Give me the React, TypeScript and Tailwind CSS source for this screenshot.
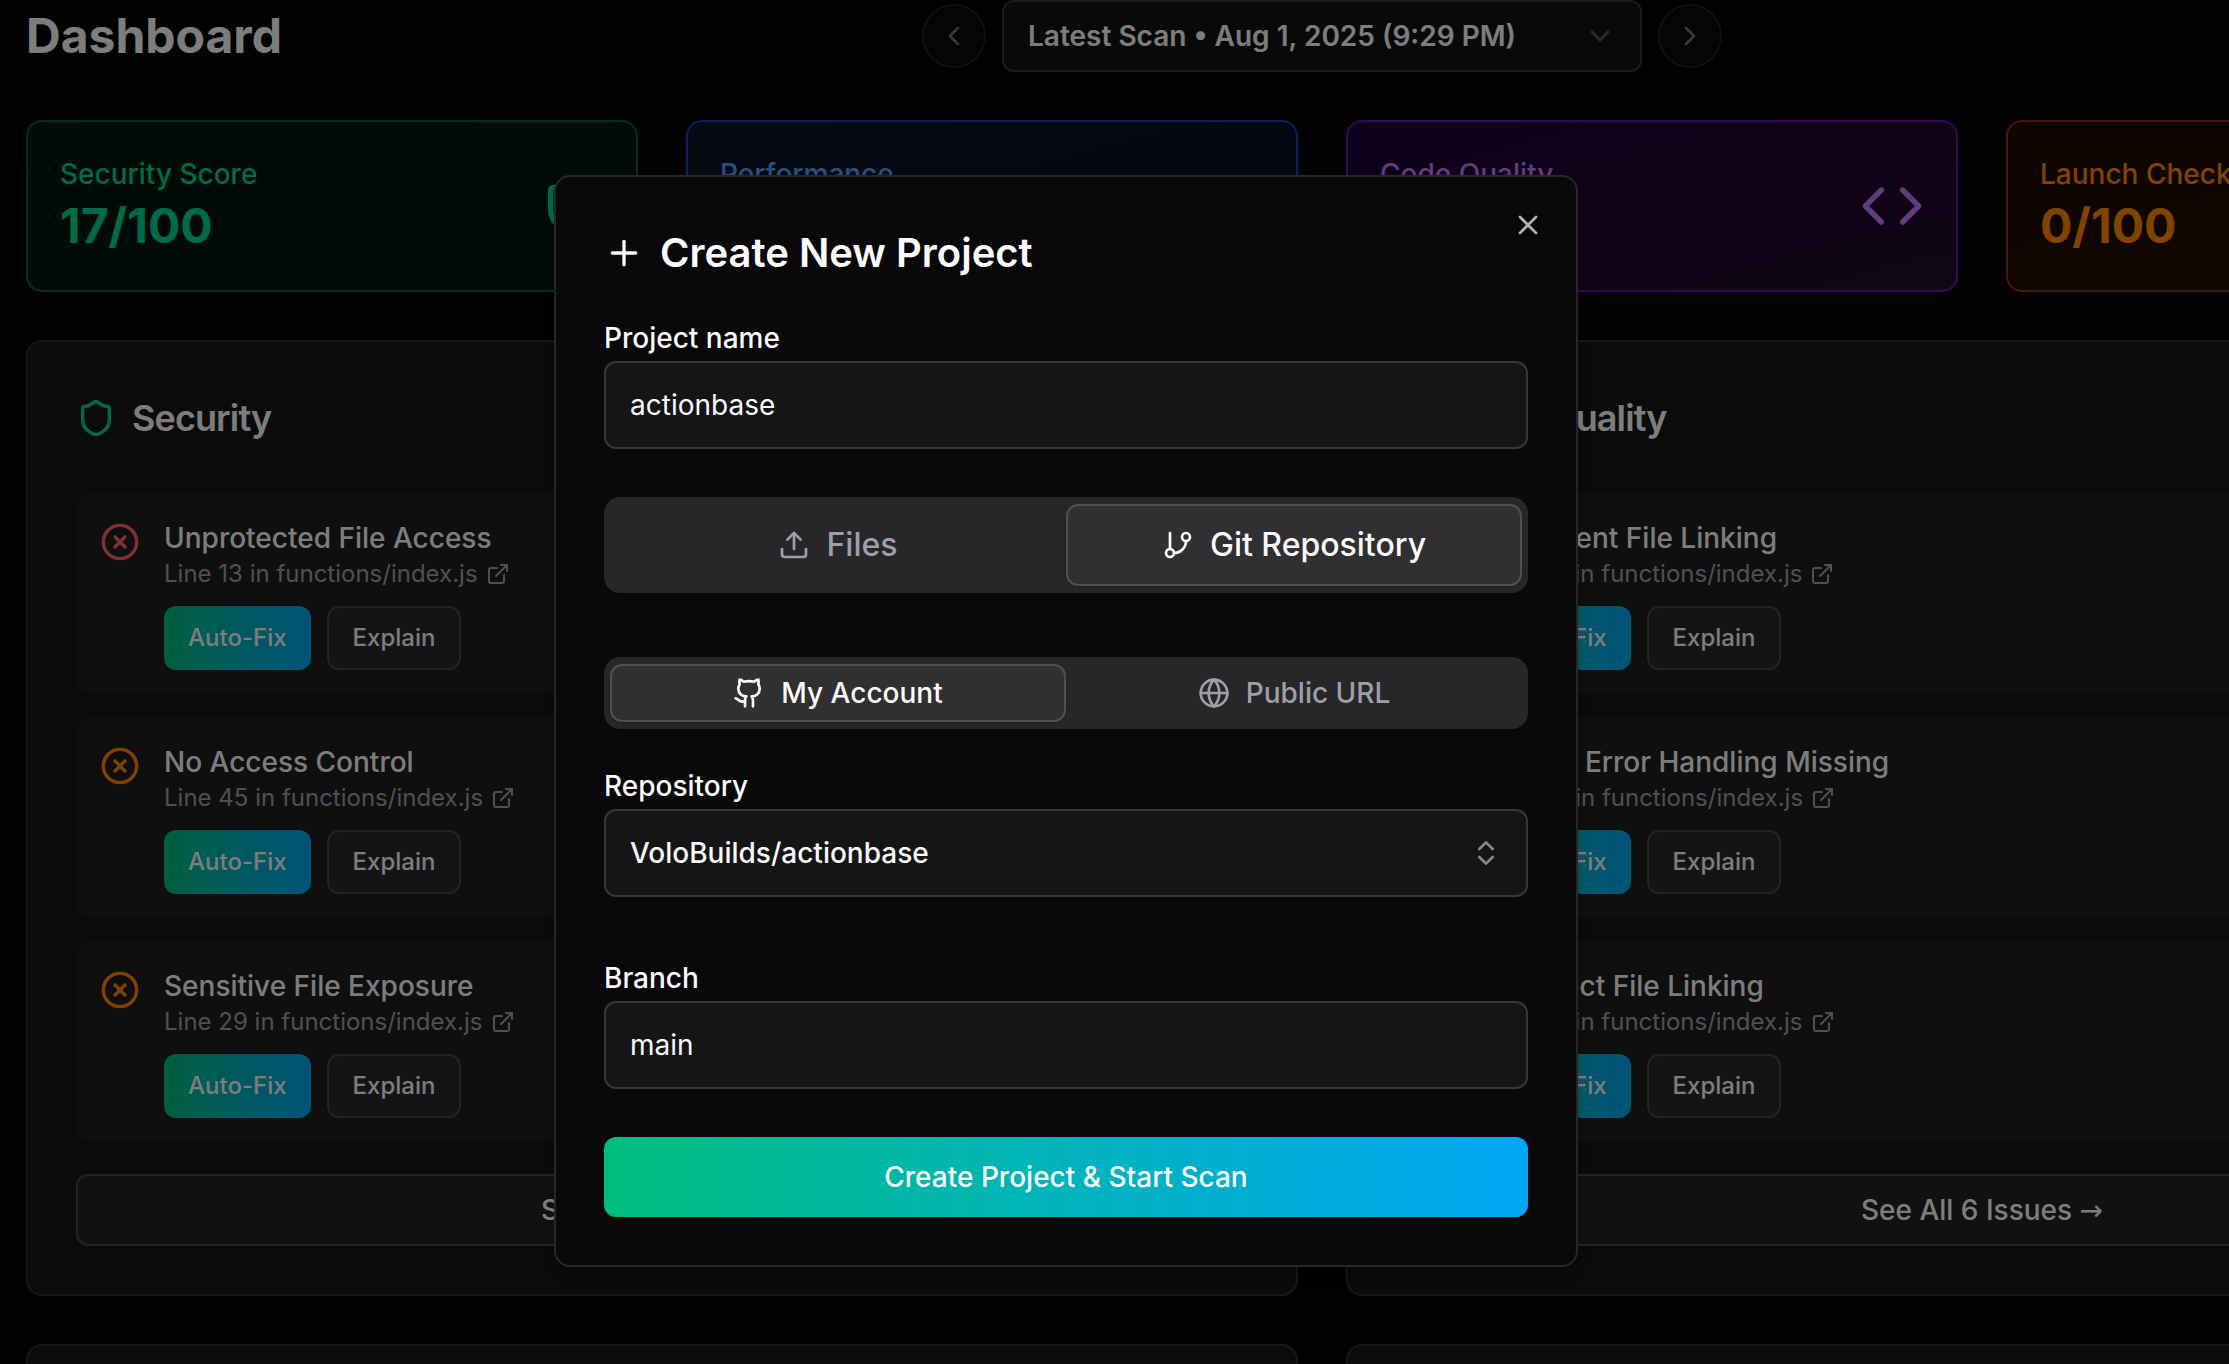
import type { ReactNode } from "react";
import {
  ChevronDown,
  ChevronLeft,
  ChevronRight,
  ChevronsUpDown,
  CircleX,
  Code,
  ExternalLink,
  GitBranch,
  Github,
  Globe,
  Plus,
  Rocket,
  Shield,
  Upload,
  X,
  Zap,
  type LucideIcon,
} from "lucide-react";
import { clsx } from "clsx";

type Issue = { title: string; line: number; severity: "high" | "medium" };

const scores = [
  {
    label: "Security Score",
    value: "17/100",
    icon: Shield,
    className: "border-emerald-800 from-[#001812] to-[#051612] text-emerald-400",
  },
  {
    label: "Performance",
    value: "42/100",
    icon: Zap,
    className: "border-blue-800 from-[#0c1528] to-[#080c24] text-blue-400",
  },
  {
    label: "Code Quality",
    value: "35/100",
    icon: Code,
    className: "border-purple-800 from-[#1e0038] to-[#200e28] text-purple-400",
  },
  {
    label: "Launch Checklist",
    value: "0/100",
    icon: Rocket,
    className: "border-orange-800 from-[#1e0c02] to-[#260e06] text-orange-400",
  },
];

const securityIssues: Issue[] = [
  { title: "Unprotected File Access", line: 13, severity: "high" },
  { title: "No Access Control", line: 45, severity: "medium" },
  { title: "Sensitive File Exposure", line: 29, severity: "medium" },
];

const qualityIssues: Issue[] = [
  { title: "Persistent File Linking", line: 23, severity: "medium" },
  { title: "Robust Error Handling Missing", line: 45, severity: "medium" },
  { title: "Incorrect File Linking", line: 29, severity: "medium" },
];

function ScoreCard({ label, value, icon: Icon, className }: (typeof scores)[number]) {
  return (
    <div
      className={clsx(
        "flex items-center justify-between rounded-2xl border-2 bg-gradient-to-br p-8",
        className,
      )}
    >
      <div>
        <p className="text-[28px] leading-10 font-medium">{label}</p>
        <p className="text-5xl leading-16 font-bold">{value}</p>
      </div>
      <Icon className="size-16" />
    </div>
  );
}

function IssueRow({ title, line, severity }: Issue) {
  return (
    <li className="flex items-start gap-6 rounded-2xl bg-[#1e1e21] p-6">
      <CircleX
        className={clsx("mt-1 size-10", severity === "high" ? "text-red-400" : "text-orange-400")}
      />
      <div>
        <h3 className="text-[28px] leading-10 font-medium">{title}</h3>
        <a href="#issue" className="flex items-center gap-2 text-2xl text-zinc-400">
          Line {line} in functions/index.js
          <ExternalLink className="size-6" />
        </a>
        <div className="mt-4 flex gap-4">
          <button
            type="button"
            className="h-16 rounded-xl bg-gradient-to-r from-emerald-500 to-sky-500 px-6 text-2xl font-medium"
          >
            Auto-Fix
          </button>
          <button
            type="button"
            className="h-16 rounded-xl border-2 border-[#464648] bg-[#28282b] px-6 text-2xl font-medium"
          >
            Explain
          </button>
        </div>
      </div>
    </li>
  );
}

function IssuePanel({
  title,
  icon: Icon,
  iconClassName,
  issues,
}: {
  title: string;
  icon: LucideIcon;
  iconClassName: string;
  issues: Issue[];
}) {
  return (
    <section className="rounded-2xl border-2 border-[#2e2e2e] bg-neutral-900 p-12">
      <h2 className="flex items-center gap-4 text-4xl leading-14 font-semibold tracking-tight">
        <Icon className={clsx("size-10", iconClassName)} />
        {title}
      </h2>
      <ul className="mt-12 flex flex-col gap-6">
        {issues.map((issue) => (
          <IssueRow key={issue.title} {...issue} />
        ))}
      </ul>
      <button
        type="button"
        className="mt-8 h-18 w-full rounded-xl border-2 border-[#464646] bg-[#222222] text-[28px] font-medium"
      >
        See All 6 Issues <span className="font-['DejaVu_Sans',sans-serif] font-normal">→</span>
      </button>
    </section>
  );
}

function RoundButton({ label, children }: { label: string; children: ReactNode }) {
  return (
    <button
      type="button"
      aria-label={label}
      className="flex size-16 items-center justify-center rounded-full border-2 border-[#202020] bg-[#080808] text-neutral-500"
    >
      {children}
    </button>
  );
}

function Tab({
  icon: Icon,
  active = false,
  className,
  children,
}: {
  icon: LucideIcon;
  active?: boolean;
  className: string;
  children: ReactNode;
}) {
  return (
    <button
      type="button"
      role="tab"
      aria-selected={active}
      className={clsx(
        "flex flex-1 items-center justify-center gap-4 rounded-xl border-2 font-medium",
        active
          ? "border-[#505053] bg-[#303032] text-neutral-50 shadow-sm"
          : "border-transparent text-zinc-400",
        className,
      )}
    >
      <Icon className="size-8" />
      {children}
    </button>
  );
}

const labelClass = "block pt-0.5 text-[28px] leading-[46px] font-medium";

const fieldClass =
  "h-22 w-full rounded-xl border-2 border-[#37373a] bg-[#151517] px-6 text-[28px] text-neutral-50 outline-none";

function Dashboard() {
  return (
    <div className="min-w-[2644px] px-[26px]">
      <header className="flex items-center">
        <h1 className="flex-1 text-5xl font-bold">Dashboard</h1>
        <div className="flex items-center gap-4">
          <RoundButton label="Previous scan">
            <ChevronLeft className="size-8" />
          </RoundButton>
          <div className="relative w-[640px]">
            <select
              aria-label="Scan"
              className="h-18 w-full appearance-none rounded-xl border-2 border-[#363636] bg-[#131313] px-6 text-[28px] font-semibold"
            >
              <option>Latest Scan • Aug 1, 2025 (9:29 PM)</option>
            </select>
            <ChevronDown className="pointer-events-none absolute top-5 right-6.5 size-8 opacity-30" />
          </div>
          <RoundButton label="Next scan">
            <ChevronRight className="size-8" />
          </RoundButton>
        </div>
        <div className="flex-1" />
      </header>

      <div className="mt-12 grid grid-cols-4 gap-12">
        {scores.map((score) => (
          <ScoreCard key={score.label} {...score} />
        ))}
      </div>

      <div className="mt-12 grid grid-cols-2 gap-12">
        <IssuePanel
          title="Security"
          icon={Shield}
          iconClassName="text-emerald-400"
          issues={securityIssues}
        />
        <IssuePanel
          title="Code Quality"
          icon={Code}
          iconClassName="text-purple-400"
          issues={qualityIssues}
        />
        <section className="h-96 rounded-2xl border-2 border-[#2e2e2e] bg-neutral-900" />
        <section className="h-96 rounded-2xl border-2 border-[#2e2e2e] bg-neutral-900" />
      </div>
    </div>
  );
}

function CreateProjectDialog() {
  return (
    <div
      role="dialog"
      aria-labelledby="dialog-title"
      className="absolute top-[175px] left-[554px] w-[1024px] rounded-2xl border-2 border-zinc-800 bg-zinc-950 p-12 text-neutral-50 shadow-lg"
    >
      <h2
        id="dialog-title"
        className="flex items-center gap-4 text-[40px] leading-14 font-semibold"
      >
        <Plus className="size-10" />
        Create New Project
      </h2>
      <button type="button" aria-label="Close" className="absolute top-8 right-8 opacity-70">
        <X className="size-8" />
      </button>

      <form className="mt-8">
        <label htmlFor="name" className={labelClass}>
          Project name
        </label>
        <input id="name" defaultValue="actionbase" className={fieldClass} />

        <div role="tablist" className="mt-12 flex rounded-2xl bg-zinc-800 px-1.5 py-[7px]">
          <Tab icon={Upload} className="h-[82px] text-[32px]">
            Files
          </Tab>
          <Tab icon={GitBranch} active className="h-[82px] text-[32px]">
            Git Repository
          </Tab>
        </div>

        <div role="tablist" className="mt-16 flex rounded-2xl bg-zinc-800 px-1.5 py-[7px]">
          <Tab icon={Github} active className="h-[58px] text-[28px]">
            My Account
          </Tab>
          <Tab icon={Globe} className="h-[58px] text-[28px]">
            Public URL
          </Tab>
        </div>

        <label htmlFor="repository" className={clsx(labelClass, "mt-8")}>
          Repository
        </label>
        <div className="relative">
          <select id="repository" className={clsx(fieldClass, "appearance-none font-medium")}>
            <option>VoloBuilds/actionbase</option>
          </select>
          <ChevronsUpDown className="pointer-events-none absolute top-7 right-6.5 size-8 opacity-50" />
        </div>

        <label htmlFor="branch" className={clsx(labelClass, "mt-14")}>
          Branch
        </label>
        <input id="branch" defaultValue="main" className={fieldClass} />

        <button
          type="submit"
          className="mt-12 h-20 w-full rounded-xl bg-gradient-to-r from-emerald-500 to-sky-500 text-[28px] font-medium"
        >
          Create Project &amp; Start Scan
        </button>
      </form>
    </div>
  );
}

export default function App() {
  return (
    <div className="relative h-screen overflow-hidden bg-[#040404] font-[Inter,sans-serif] text-neutral-50">
      <Dashboard />
      <div className="absolute inset-0 bg-black/50" />
      <CreateProjectDialog />
    </div>
  );
}
